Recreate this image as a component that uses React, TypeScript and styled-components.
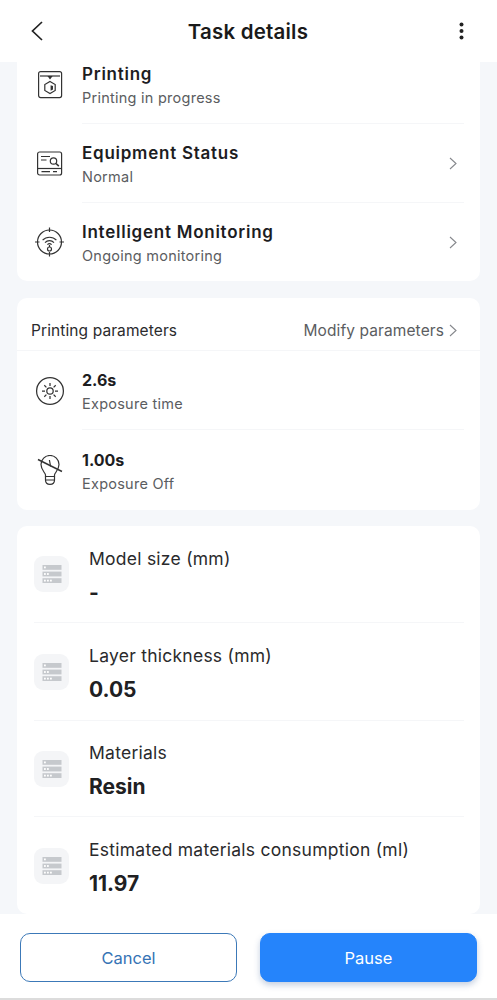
import styled, { createGlobalStyle } from "styled-components";

const GlobalStyle = createGlobalStyle`
  html, body {
    margin: 0;
    padding: 0;
    background: #fff;
  }
  * {
    box-sizing: border-box;
  }
`;

const Page = styled.div`
  width: 497px;
  height: 1000px;
  display: flex;
  flex-direction: column;
  background: #f5f7fa;
  font-family: Inter, "Liberation Sans", sans-serif;
  color: #1c1c1e;
  overflow: hidden;
`;

const Header = styled.header`
  height: 62px;
  flex: none;
  display: flex;
  align-items: center;
  justify-content: space-between;
  padding: 0 18px 0 20px;
  background: #fff;
`;

const HeaderTitle = styled.h1`
  margin: 0 3px 0 0;
  font-size: 20.5px;
  font-weight: 600;
  letter-spacing: 0.2px;
  color: #1a1a1a;
`;

const HeaderButton = styled.div`
  width: 34px;
  height: 24px;
  display: flex;
  align-items: center;
  justify-content: center;
`;

/* the list is scrolled a little, so the first card runs under the header */
const Content = styled.main`
  flex: 1;
  min-height: 0;
  display: flex;
  flex-direction: column;
  padding: 0 17px;
  overflow: hidden;
`;

const Card = styled.section<{ $scrolled?: number; $gap: number }>`
  flex: none;
  margin-top: ${(p) => -(p.$scrolled ?? 0)}px;
  margin-bottom: ${(p) => p.$gap}px;
  background: #fff;
  border-radius: 10px;
`;

const StatusRow = styled.div<{ $height: number }>`
  height: ${(p) => p.$height}px;
  display: flex;
  align-items: stretch;
  padding: 0 16px;
`;

const IconCol = styled.div`
  width: 34px;
  flex: none;
  margin-right: 15px;
  display: flex;
  align-items: center;
  justify-content: center;
`;

const RowBody = styled.div<{ $line?: boolean }>`
  flex: 1;
  display: flex;
  align-items: center;
  justify-content: space-between;
  padding-right: 7px;
  border-bottom: ${(p) => (p.$line ? "1px solid #f5f6f8" : "none")};
`;

const RowText = styled.div`
  display: flex;
  flex-direction: column;
  gap: 5px;
  padding-top: 2px;
`;

const RowTitle = styled.div`
  font-size: 17px;
  line-height: 20px;
  font-weight: 600;
  letter-spacing: 0.75px;
  color: #1d1d1f;
`;

const RowValue = styled.div`
  font-size: 16px;
  line-height: 20px;
  font-weight: 700;
  color: #1d1d1f;
`;

const RowSub = styled.div`
  font-size: 14.5px;
  line-height: 18px;
  letter-spacing: 0.25px;
  color: #5b5d61;
`;

const CardHead = styled.div`
  height: 53px;
  display: flex;
  align-items: center;
  justify-content: space-between;
  padding: 13px 23px 0 14px;
  border-bottom: 1px solid #f5f6f8;
`;

const CardTitle = styled.div`
  font-size: 15.5px;
  letter-spacing: 0.1px;
  color: #2b2b2d;
`;

const HeadLink = styled.div`
  display: flex;
  align-items: center;
  gap: 5px;
  font-size: 15.5px;
  letter-spacing: 0.1px;
  color: #5b5d61;
`;

const InfoRow = styled.div<{ $height: number; $line?: boolean }>`
  height: ${(p) => p.$height}px;
  margin: 0 16px 0 17px;
  display: flex;
  align-items: center;
  gap: 20px;
  border-bottom: ${(p) => (p.$line ? "1px solid #f5f6f8" : "none")};
`;

const InfoTile = styled.div`
  width: 35px;
  height: 36px;
  flex: none;
  display: flex;
  align-items: center;
  justify-content: center;
  border-radius: 9px;
  background: #f4f5f7;
`;

const InfoText = styled.div`
  display: flex;
  flex-direction: column;
  gap: 10px;
  padding-top: 5px;
`;

const InfoLabel = styled.div`
  font-size: 17.5px;
  line-height: 22px;
  letter-spacing: 0.25px;
  color: #2a2a2c;
`;

const InfoValue = styled.div`
  font-size: 21px;
  line-height: 26px;
  font-weight: 700;
  color: #202022;
`;

const Footer = styled.footer`
  height: 86px;
  flex: none;
  display: flex;
  justify-content: space-between;
  padding: 19px 20px 0;
  background: #fff;
  border-bottom: 2px solid #dcdcdc;
`;

const ActionButton = styled.button<{ $primary?: boolean }>`
  width: 217px;
  height: 49px;
  border-radius: 10px;
  border: 1.5px solid ${(p) => (p.$primary ? "#2584fb" : "#3c79b8")};
  background: ${(p) => (p.$primary ? "#2584fb" : "#fff")};
  color: ${(p) => (p.$primary ? "#fff" : "#3573b5")};
  box-shadow: ${(p) => (p.$primary ? "0 3px 6px rgba(40, 80, 140, 0.28)" : "none")};
  font-family: inherit;
  font-size: 16.5px;
`;

const Chevron = () => (
  <svg width="8" height="13" viewBox="0 0 8 13" fill="none" stroke="#85878c" strokeWidth="1.1">
    <path d="M1 1 L7 6.5 L1 12" />
  </svg>
);

const PrintingIcon = () => (
  <svg width="30" height="30" viewBox="0 0 30 30" fill="none" stroke="#333" strokeWidth="1.2">
    <rect x="3.6" y="1.6" width="23" height="26" rx="2" />
    <path d="M5 6 H25" />
    <path d="M13.5 6.5 L15 8.5 L16.5 6.5 Z" fill="#333" />
    <path d="M15 11.5 L20.2 14.5 V20.5 L15 23.5 L9.8 20.5 V14.5 Z" />
    <path d="M15.6 15.2 L18 16 V19.4 L15.6 20.8 Z" fill="#333" stroke="none" />
  </svg>
);

const EquipmentIcon = () => (
  <svg width="30" height="30" viewBox="0 0 30 30" fill="none" stroke="#333" strokeWidth="1.2">
    <rect x="2.6" y="3" width="24" height="23" rx="2" />
    <path d="M2.6 19.5 H26.6" />
    <path d="M6 7.5 H15 M6 11 H11.5" />
    <circle cx="18.5" cy="12" r="3.2" />
    <path d="M21 14.5 L23.8 17.2" strokeWidth="1.6" />
    <path d="M6.5 22.7 H15 M18 22.7 H22" />
  </svg>
);

const MonitorIcon = () => (
  <svg width="30" height="30" viewBox="0 0 30 30" fill="none" stroke="#333" strokeWidth="1.2">
    <circle cx="14.5" cy="15" r="12" />
    <path d="M14.5 0.5 V5 M14.5 25 V29.5 M0 15 H4.5 M24.5 15 H29" />
    <path d="M7.6 13.2 A9.6 9.6 0 0 1 21.4 13.2" />
    <path d="M10 15.6 A6.2 6.2 0 0 1 19 15.6" />
    <path d="M12.4 17.6 A3 3 0 0 1 16.6 17.6" />
    <path d="M14.5 18 V20" />
    <circle cx="14.5" cy="22" r="2" />
  </svg>
);

const SunIcon = () => (
  <svg width="30" height="30" viewBox="0 0 30 30" fill="none" stroke="#333" strokeWidth="1.25">
    <circle cx="15" cy="15" r="13.4" />
    <circle cx="15" cy="15" r="3.2" />
    <path d="M15 7 V10 M15 20 V23 M7 15 H10 M20 15 H23 M9.3 9.3 L11.4 11.4 M18.6 18.6 L20.7 20.7 M20.7 9.3 L18.6 11.4 M11.4 18.6 L9.3 20.7" />
  </svg>
);

const BulbIcon = () => (
  <svg width="30" height="30" viewBox="0 0 30 30" fill="none" stroke="#333" strokeWidth="1.2">
    <path d="M10.5 21.5 V20 C10.5 18 6 15 6 9.5 A9 9 0 0 1 24 9.5 C24 15 19.5 18 19.5 20 V21.5 Z" />
    <path d="M10.5 21.5 V25 Q10.5 29.4 15 29.4 Q19.5 29.4 19.5 25 V21.5 M10.5 25 H19.5" />
    <path d="M14.4 5 L15.6 11.5" />
    <path d="M3 4.5 L27 16.5" strokeWidth="1.4" />
  </svg>
);

const ListIcon = () => (
  <svg width="20" height="20" viewBox="0 0 20 20">
    {[1, 7.6, 14.2].map((y, i) => (
      <g key={y}>
        <rect x="0.5" y={y} width="19" height="4.8" fill="#c6c9cd" />
        {[0, 1, 2].slice(0, i + 1).map((d) => (
          <rect key={d} x={2 + d * 3} y={y + 1.5} width="1.8" height="1.8" fill="#fff" />
        ))}
      </g>
    ))}
  </svg>
);

const infoRows = [
  { label: "Model size (mm)", value: "-", height: 97 },
  { label: "Layer thickness (mm)", value: "0.05", height: 98 },
  { label: "Materials", value: "Resin", height: 96 },
  { label: "Estimated materials consumption (ml)", value: "11.97", height: 97 },
];

export default function App() {
  return (
    <Page>
      <GlobalStyle />
      <Header>
        <HeaderButton>
          <svg width="14" height="20" viewBox="0 0 14 20" fill="none" stroke="#222" strokeWidth="1.7">
            <path d="M12 1 L2.5 10 L12 19" />
          </svg>
        </HeaderButton>
        <HeaderTitle>Task details</HeaderTitle>
        <HeaderButton>
          <svg width="5" height="18" viewBox="0 0 5 18" fill="#222">
            <circle cx="2.5" cy="2.5" r="2" />
            <circle cx="2.5" cy="9" r="2" />
            <circle cx="2.5" cy="15.5" r="2" />
          </svg>
        </HeaderButton>
      </Header>
      <Content>
        <Card $scrolled={17} $gap={17}>
          <StatusRow $height={79}>
            <IconCol>
              <PrintingIcon />
            </IconCol>
            <RowBody $line>
              <RowText>
                <RowTitle>Printing</RowTitle>
                <RowSub>Printing in progress</RowSub>
              </RowText>
            </RowBody>
          </StatusRow>
          <StatusRow $height={79}>
            <IconCol>
              <EquipmentIcon />
            </IconCol>
            <RowBody $line>
              <RowText>
                <RowTitle>Equipment Status</RowTitle>
                <RowSub>Normal</RowSub>
              </RowText>
              <Chevron />
            </RowBody>
          </StatusRow>
          <StatusRow $height={78}>
            <IconCol>
              <MonitorIcon />
            </IconCol>
            <RowBody>
              <RowText>
                <RowTitle>Intelligent Monitoring</RowTitle>
                <RowSub>Ongoing monitoring</RowSub>
              </RowText>
              <Chevron />
            </RowBody>
          </StatusRow>
        </Card>
        <Card $gap={16}>
          <CardHead>
            <CardTitle>Printing parameters</CardTitle>
            <HeadLink>
              Modify parameters
              <Chevron />
            </HeadLink>
          </CardHead>
          <StatusRow $height={79}>
            <IconCol>
              <SunIcon />
            </IconCol>
            <RowBody $line>
              <RowText>
                <RowValue>2.6s</RowValue>
                <RowSub>Exposure time</RowSub>
              </RowText>
            </RowBody>
          </StatusRow>
          <StatusRow $height={80}>
            <IconCol>
              <BulbIcon />
            </IconCol>
            <RowBody>
              <RowText>
                <RowValue>1.00s</RowValue>
                <RowSub>Exposure Off</RowSub>
              </RowText>
            </RowBody>
          </StatusRow>
        </Card>
        <Card $gap={0}>
          {infoRows.map((row, i) => (
            <InfoRow key={row.label} $height={row.height} $line={i < infoRows.length - 1}>
              <InfoTile>
                <ListIcon />
              </InfoTile>
              <InfoText>
                <InfoLabel>{row.label}</InfoLabel>
                <InfoValue>{row.value}</InfoValue>
              </InfoText>
            </InfoRow>
          ))}
        </Card>
      </Content>
      <Footer>
        <ActionButton>Cancel</ActionButton>
        <ActionButton $primary>Pause</ActionButton>
      </Footer>
    </Page>
  );
}
